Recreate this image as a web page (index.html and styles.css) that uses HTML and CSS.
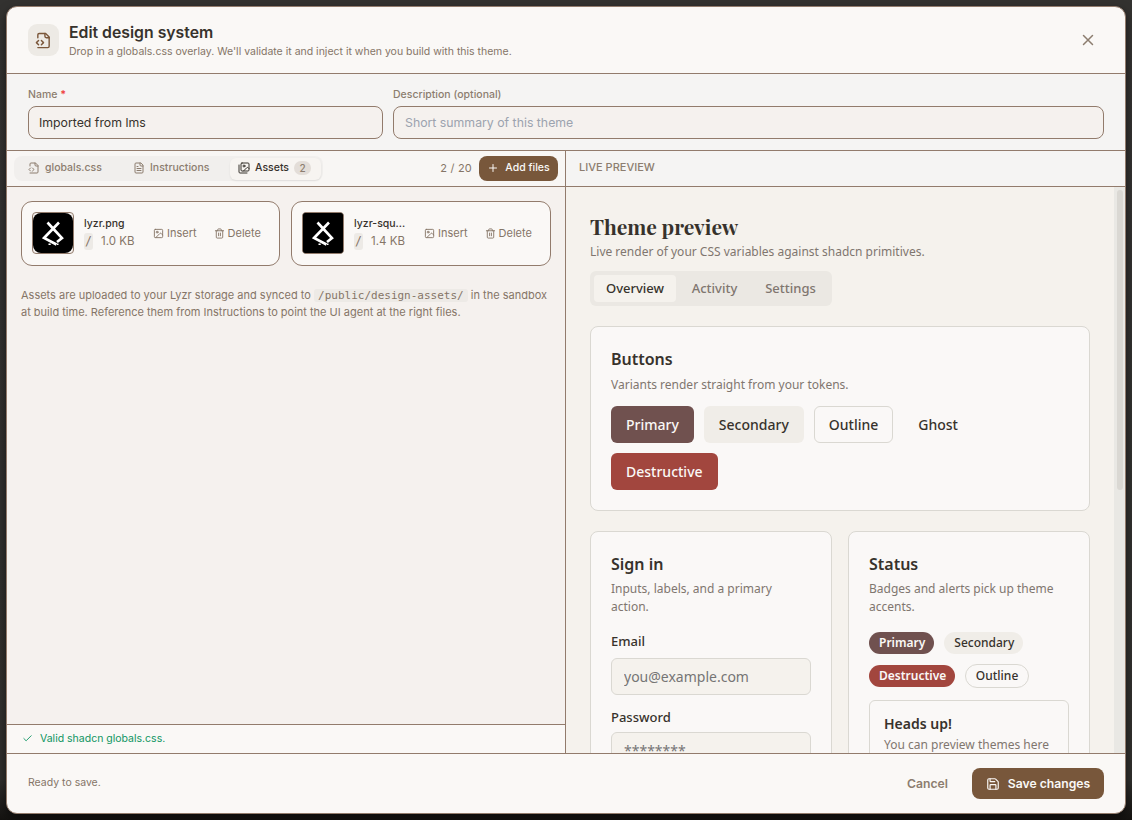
FILE: index.html
```html
<!DOCTYPE html>
<html lang="en">
<head>
  <meta charset="UTF-8">
  <meta name="viewport" content="width=device-width, initial-scale=1.0">
  <title>Edit design system</title>
  <link rel="stylesheet" href="styles.css">
</head>
<body>
  <svg width="0" height="0" class="defs">
    <symbol id="file-code" viewBox="0 0 24 24">
      <path d="M4 8V4a2 2 0 0 1 2-2h9l5 5v13a2 2 0 0 1-2 2H4"/><path d="M14 2v4a2 2 0 0 0 2 2h4"/><path d="m5 12-3 3 3 3"/><path d="m9 18 3-3-3-3"/>
    </symbol>
    <symbol id="file-text" viewBox="0 0 24 24">
      <path d="M15 2H6a2 2 0 0 0-2 2v16a2 2 0 0 0 2 2h12a2 2 0 0 0 2-2V7Z"/><path d="M14 2v4a2 2 0 0 0 2 2h4M10 9H8M16 13H8M16 17H8"/>
    </symbol>
    <symbol id="images" viewBox="0 0 24 24">
      <path d="M18 22H4a2 2 0 0 1-2-2V6"/><path d="m22 13-1.3-1.3a2.4 2.4 0 0 0-3.4 0L11 18"/><circle cx="12" cy="8" r="2"/><rect width="16" height="16" x="6" y="2" rx="2"/>
    </symbol>
    <symbol id="image" viewBox="0 0 24 24">
      <rect width="18" height="18" x="3" y="3" rx="2"/><circle cx="9" cy="9" r="2"/><path d="m21 15-3.1-3.1a2 2 0 0 0-2.8 0L6 21"/>
    </symbol>
    <symbol id="trash" viewBox="0 0 24 24">
      <path d="M3 6h18M19 6v14a2 2 0 0 1-2 2H7a2 2 0 0 1-2-2V6M8 6V4a2 2 0 0 1 2-2h4a2 2 0 0 1 2 2v2M10 11v6M14 11v6"/>
    </symbol>
    <symbol id="save" viewBox="0 0 24 24">
      <path d="M15.2 3a2 2 0 0 1 1.4.6l3.8 3.8a2 2 0 0 1 .6 1.4V19a2 2 0 0 1-2 2H5a2 2 0 0 1-2-2V5a2 2 0 0 1 2-2z"/><path d="M17 21v-7a1 1 0 0 0-1-1H8a1 1 0 0 0-1 1v7M7 3v4a1 1 0 0 0 1 1h7"/>
    </symbol>
    <symbol id="lyzr" viewBox="0 0 40 40">
      <path d="M14.5 9.5 20.5 16 29 25l-5 4M26 9.5 11 25l12.5 6.5"/><path d="M15.5 31.2h2.2M24 31.2h1.5" class="dots"/>
    </symbol>
  </svg>

  <div class="dialog">
    <header class="dialog-header">
      <div class="header-icon"><svg class="icon"><use href="#file-code"/></svg></div>
      <div class="header-text">
        <h1>Edit design system</h1>
        <p>Drop in a globals.css overlay. We'll validate it and inject it when you build with this theme.</p>
      </div>
      <button class="close"><svg class="icon" viewBox="0 0 24 24"><path d="M18 6 6 18M6 6l12 12"/></svg></button>
    </header>

    <section class="fields">
      <label class="field field-name">
        <span>Name <b>*</b></span>
        <input type="text" value="Imported from lms">
      </label>
      <label class="field field-desc">
        <span>Description (optional)</span>
        <input type="text" placeholder="Short summary of this theme">
      </label>
    </section>

    <main class="panes">
      <section class="editor">
        <div class="toolbar">
          <div class="tabs">
            <button class="tab tab-css"><svg class="icon"><use href="#file-code"/></svg>globals.css</button>
            <button class="tab tab-instructions"><svg class="icon"><use href="#file-text"/></svg>Instructions</button>
            <button class="tab active"><svg class="icon"><use href="#images"/></svg>Assets <span class="count">2</span></button>
          </div>
          <span class="quota">2 / 20</span>
          <button class="add"><svg class="icon" viewBox="0 0 24 24"><path d="M5 12h14M12 5v14"/></svg>Add files</button>
        </div>

        <div class="assets">
          <div class="asset-grid">
            <div class="asset">
              <div class="thumb rounded"><svg><use href="#lyzr"/></svg></div>
              <div class="asset-info">
                <div class="asset-name">lyzr.png</div>
                <div class="asset-meta"><code>/</code>1.0 KB</div>
              </div>
              <button class="link insert"><svg class="icon"><use href="#image"/></svg>Insert</button>
              <button class="link"><svg class="icon"><use href="#trash"/></svg>Delete</button>
            </div>
            <div class="asset">
              <div class="thumb"><svg><use href="#lyzr"/></svg></div>
              <div class="asset-info">
                <div class="asset-name">lyzr-squ...</div>
                <div class="asset-meta"><code>/</code>1.4 KB</div>
              </div>
              <button class="link insert"><svg class="icon"><use href="#image"/></svg>Insert</button>
              <button class="link"><svg class="icon"><use href="#trash"/></svg>Delete</button>
            </div>
          </div>
          <p class="hint">Assets are uploaded to your Lyzr storage and synced to <code>/public/design-assets/</code> in the sandbox<br>at build time. Reference them from Instructions to point the UI agent at the right files.</p>
        </div>

        <div class="valid"><svg class="icon" viewBox="0 0 24 24"><path d="M20 6 9 17l-5-5"/></svg>Valid shadcn globals.css.</div>
      </section>

      <section class="preview">
        <div class="preview-head">LIVE PREVIEW</div>
        <div class="preview-body">
          <div class="canvas">
            <h2>Theme preview</h2>
            <p class="lead">Live render of your CSS variables against shadcn primitives.</p>
            <div class="p-tabs">
              <span class="on">Overview</span><span>Activity</span><span>Settings</span>
            </div>

            <div class="card">
              <h3>Buttons</h3>
              <p>Variants render straight from your tokens.</p>
              <div class="buttons">
                <button class="btn primary">Primary</button>
                <button class="btn secondary">Secondary</button>
                <button class="btn outline">Outline</button>
                <button class="btn ghost">Ghost</button>
                <button class="btn destructive">Destructive</button>
              </div>
            </div>

            <div class="cards">
              <div class="card">
                <h3>Sign in</h3>
                <p>Inputs, labels, and a primary action.</p>
                <label class="p-label">Email</label>
                <input class="p-input" type="text" placeholder="you@example.com">
                <label class="p-label">Password</label>
                <input class="p-input" type="text" placeholder="********">
              </div>
              <div class="card">
                <h3>Status</h3>
                <p>Badges and alerts pick up theme accents.</p>
                <div class="badges">
                  <span class="badge primary">Primary</span>
                  <span class="badge secondary">Secondary</span>
                  <span class="badge destructive">Destructive</span>
                  <span class="badge outline">Outline</span>
                </div>
                <div class="alert">
                  <h4>Heads up!</h4>
                  <p>You can preview themes here</p>
                </div>
              </div>
            </div>
          </div>
          <div class="scrollbar"><div class="scroll-thumb"></div></div>
        </div>
      </section>
    </main>

    <footer class="dialog-footer">
      <span class="ready">Ready to save.</span>
      <button class="cancel">Cancel</button>
      <button class="save"><svg class="icon"><use href="#save"/></svg>Save changes</button>
    </footer>
  </div>
</body>
</html>
```
FILE: styles.css
```css
* {
  box-sizing: border-box;
}
body {
  margin: 0;
  height: 820px;
  padding: 6px 6px 6px;
  overflow: hidden;
  background: linear-gradient(#333230, #302f2d 95%, #141210);
  font-family: Inter, sans-serif;
  color: #37322c;
}
h1, h2, h3, h4, p {
  margin: 0;
}
button {
  border: 0;
  padding: 0;
  background: none;
  font: inherit;
  color: inherit;
  white-space: nowrap;
}
input {
  display: block;
  width: 100%;
  outline: none;
}
.defs {
  position: absolute;
}
.icon {
  flex: none;
  fill: none;
  stroke: currentColor;
  stroke-width: 2;
  stroke-linecap: round;
  stroke-linejoin: round;
}
.dialog {
  display: flex;
  flex-direction: column;
  width: 1120px;
  height: 808px;
  border: 1px solid #927b6c;
  border-radius: 11px;
  background: #faf8f6;
  box-shadow: 0 4px 10px rgba(0,0,0,0.5);
  overflow: hidden;
}

/* header */
.dialog-header {
  display: flex;
  height: 67px;
  flex: none;
  padding: 17px 28px 0 21px;
  border-bottom: 1px solid #927b6c;
}
.header-icon {
  display: flex;
  align-items: center;
  justify-content: center;
  width: 31px;
  height: 32px;
  border-radius: 9px;
  background: #edeae5;
  color: #7b573b;
}
.header-icon .icon {
  width: 17px;
  height: 17px;
}
.header-text {
  flex: 1;
  padding-left: 10px;
}
.header-text h1 {
  font-size: 15.8px;
  line-height: 18px;
  font-weight: 600;
}
.header-text p {
  margin-top: 2px;
  font-size: 10.5px;
  line-height: 15px;
  color: #857567;
}
.close {
  width: 18px;
  height: 18px;
  margin-top: 7px;
  color: #8c7d6f;
}
.close .icon {
  display: block;
  width: 18px;
  height: 18px;
}

/* name + description */
.fields {
  display: flex;
  flex: none;
  gap: 10px;
  height: 77px;
  padding: 14px 21px 0;
  border-bottom: 1px solid #927b6c;
  background: #f5f4f3;
}
.field span {
  display: block;
  height: 18px;
  font-size: 10.5px;
  line-height: 14px;
  font-weight: 500;
  color: #8c7d6f;
}
.field b {
  color: #ef4444;
}
.field-name {
  width: 355px;
}
.field-desc {
  flex: 1;
}
.field input {
  height: 33px;
  padding: 0 10px;
  border: 1px solid #927b6c;
  border-radius: 8px;
  background: #f5f1ee;
  font: 12.3px Inter, sans-serif;
  color: #37322c;
}
.field-desc input {
  padding-left: 11px;
}
.field input::placeholder {
  color: #9ca3af;
}

/* panes */
.panes {
  display: flex;
  flex: 1;
  min-height: 0;
}
.editor {
  display: flex;
  flex-direction: column;
  width: 559px;
  border-right: 1px solid #927b6c;
  background: #f5f1ee;
}
.toolbar {
  display: flex;
  flex: none;
  align-items: center;
  height: 36px;
  padding: 0 7px;
  border-bottom: 1px solid #927b6c;
  background: #f8f6f4;
}
.tabs {
  display: flex;
  align-items: center;
  width: 309px;
  height: 25px;
  padding: 0 2px;
  border-radius: 8px;
  background: #f1efed;
}
.tab {
  display: flex;
  align-items: center;
  height: 22px;
  padding: 0 8px 2px;
  border-radius: 6px;
  font-size: 10.5px;
  font-weight: 500;
  color: #8c7d6f;
}
.tab .icon {
  width: 12px;
  height: 12px;
  margin-right: 5px;
  margin-top: 1px;
}
.tab-css {
  width: 106px;
  padding-left: 12px;
}
.tab-instructions {
  width: 108px;
  padding-left: 11px;
}
.tab.active {
  flex: 1;
  background: #f7f4f1;
  color: #37322c;
  box-shadow: 0 1px 2px rgba(0,0,0,0.08);
}
.count {
  width: 17px;
  margin-left: 5px;
  margin-top: 1px;
  border-radius: 8px;
  background: #e3ddd8;
  font-size: 10px;
  line-height: 14px;
  text-align: center;
  color: #8c7d6f;
}
.quota {
  margin-left: auto;
  margin-top: -1px;
  font-size: 11px;
  letter-spacing: 0.2px;
  color: #857567;
}
.add {
  display: flex;
  align-items: center;
  justify-content: center;
  gap: 6px;
  width: 79px;
  height: 25px;
  margin-left: 7px;
  padding-bottom: 2px;
  border-radius: 8px;
  background: #78573b;
  font-size: 10.5px;
  font-weight: 500;
  color: #faf8f6;
}
.add .icon {
  width: 12px;
  height: 12px;
  margin-top: 1px;
}

/* assets */
.assets {
  flex: 1;
  padding: 14px;
}
.asset-grid {
  display: flex;
  gap: 11px;
}
.asset {
  display: flex;
  align-items: center;
  width: 260px;
  height: 65px;
  padding: 0 10px 2px;
  border: 1px solid #927b6c;
  border-radius: 11px;
  background: #faf8f6;
}
.asset:first-child {
  width: 259px;
}
.thumb {
  width: 42px;
  height: 42px;
  border: 1px solid #927b6c;
  border-radius: 4px;
  background: #000;
  overflow: hidden;
}
.thumb.rounded {
  background: #f5f1ee;
}
.thumb svg {
  display: block;
  width: 40px;
  height: 40px;
  fill: none;
  stroke: #fff;
  stroke-width: 2.6;
  background: #000;
}
.dots {
  stroke-width: 1.6;
}
.thumb.rounded svg {
  border-radius: 8px;
}
.asset-info {
  width: 79px;
  padding-left: 10px;
  font-size: 11.5px;
  white-space: nowrap;
}
.asset:last-child .asset-info {
  width: 80px;
}
.asset-name {
  line-height: 16px;
  font-size: 10.5px;
  font-weight: 500;
}
.asset-meta {
  display: flex;
  line-height: 17px;
  margin-top: 1px;
  color: #857567;
}
.asset-meta code {
  width: 9px;
  margin-right: 8px;
  text-align: center;
  border-radius: 3px;
  background: #edeae6;
}
code {
  font-family: "DejaVu Sans Mono", monospace;
}
.link {
  display: flex;
  align-items: center;
  gap: 3px;
  padding-top: 1px;
  font-size: 11px;
  color: #857567;
}
.link .icon {
  width: 11px;
  height: 11px;
}
.insert {
  margin-right: 17px;
}
.hint {
  margin-top: 21px;
  font-size: 11px;
  line-height: 17px;
  color: #857567;
  white-space: nowrap;
}
.hint code {
  padding: 0 4px;
  border-radius: 3px;
  background: #edeae6;
}
.valid {
  display: flex;
  align-items: center;
  flex: none;
  gap: 7px;
  height: 29px;
  padding: 0 0 2px 15px;
  border-top: 1px solid #927b6c;
  background: #faf8f6;
  font-size: 10.5px;
  color: #0f9562;
}
.valid .icon {
  width: 11px;
  height: 11px;
}

/* live preview */
.preview {
  display: flex;
  flex-direction: column;
  flex: 1;
  font-family: "Noto Sans", sans-serif;
}
.preview-head {
  flex: none;
  height: 36px;
  padding-left: 13px;
  border-bottom: 1px solid #927b6c;
  background: #f5f4f3;
  font: 500 11px/33px Inter, sans-serif;
  color: #8c7d6f;
}
.preview-body {
  display: flex;
  flex: 1;
  min-height: 0;
  overflow: hidden;
  background: #f5f2ed;
}
.canvas {
  width: 548px;
  padding: 24px;
}
.scrollbar {
  width: 11px;
  padding: 3px 2px 0 3px;
  background: #e9e8e4;
}
.scroll-thumb {
  height: 300px;
  border-radius: 3px;
  background: #dad8d3;
}
.canvas h2 {
  padding-bottom: 2px;
  font: 700 21px/30px "Playfair Display", "Liberation Serif", serif;
}
.lead {
  font-size: 12px;
  line-height: 18px;
  color: #80766f;
}
.p-tabs {
  display: flex;
  width: 242px;
  height: 35px;
  margin-top: 10px;
  padding: 4px;
  border-radius: 6px;
  background: #ebe8e3;
  font-size: 13px;
  line-height: 27px;
  font-weight: 500;
  color: #80766f;
}
.p-tabs span {
  flex: 1;
  padding-left: 1px;
  text-align: center;
}
.p-tabs .on {
  flex: none;
  width: 82px;
  padding: 0;
  border-radius: 4px;
  background: #f5f2ed;
  color: #37322c;
}
.card {
  margin-top: 20px;
  padding: 20px;
  border: 1px solid #dad8d2;
  border-radius: 8px;
  background: #faf8f7;
}
.card h3 {
  font-size: 16px;
  line-height: 24px;
  font-weight: 600;
}
.card p {
  margin-top: 5px;
  font-size: 12px;
  line-height: 18px;
  color: #80766f;
}
.buttons {
  display: flex;
  flex-wrap: wrap;
  gap: 10px;
  margin-top: 12px;
  padding-right: 60px;
}
.btn {
  height: 37px;
  padding: 0 14px;
  border: 1px solid transparent;
  border-radius: 6px;
  font-size: 14px;
  font-weight: 500;
}
.primary {
  background: #70514f;
  color: #faf8f6;
}
.secondary {
  background: #f0ede8;
}
.btn.outline,
.badge.outline {
  border: 1px solid #dad8d2;
}
.destructive {
  background: #a2463e;
  color: #faf8f6;
}
.cards {
  display: grid;
  grid-template-columns: 1fr 1fr;
  gap: 16px;
}
.cards .card {
  height: 400px;
}
.cards .card p {
  margin-top: 4px;
}
.p-label {
  display: block;
  margin-top: 15px;
  font-size: 13px;
  line-height: 20px;
  font-weight: 500;
}
.p-input {
  height: 37px;
  margin-top: 7px;
  padding: 0 12px;
  border: 1px solid #dad8d2;
  border-radius: 6px;
  background: #f5f2ed;
  font: 14px "Noto Sans", sans-serif;
}
.p-input + .p-label {
  margin-top: 12px;
}
.p-label + .p-input:last-child {
  margin-top: 5px;
}
.badges {
  display: flex;
  flex-wrap: wrap;
  align-items: center;
  gap: 10px;
  margin-top: 16px;
}
.badge {
  padding: 0 9px 0 10px;
  border-radius: 12px;
  font-size: 12px;
  line-height: 22px;
  font-weight: 500;
}
.badge.primary,
.badge.destructive {
  font-weight: 600;
}
.badge.outline {
  padding: 0 9.5px;
}
.alert {
  height: 100px;
  margin-top: 12px;
  padding: 12px 14px;
  border: 1px solid #dad8d2;
  border-radius: 6px;
}
.alert h4 {
  font-size: 14px;
  line-height: 21px;
  font-weight: 600;
}
.cards .alert p {
  margin-top: 2px;
}

/* footer */
.dialog-footer {
  display: flex;
  align-items: center;
  flex: none;
  height: 60px;
  padding: 0 21px;
  border-top: 1px solid #927b6c;
}
.ready {
  flex: 1;
  padding-bottom: 2px;
  font-size: 10.5px;
  color: #857567;
}
.cancel {
  margin-right: 24px;
  font-size: 12.2px;
  font-weight: 600;
  color: #8c7d6f;
}
.save {
  display: flex;
  align-items: center;
  justify-content: center;
  gap: 8px;
  width: 132px;
  height: 31px;
  border-radius: 8px;
  background: #78573b;
  font-size: 12.2px;
  font-weight: 600;
  color: #faf8f6;
}
.save .icon {
  width: 14px;
  height: 14px;
}
```
